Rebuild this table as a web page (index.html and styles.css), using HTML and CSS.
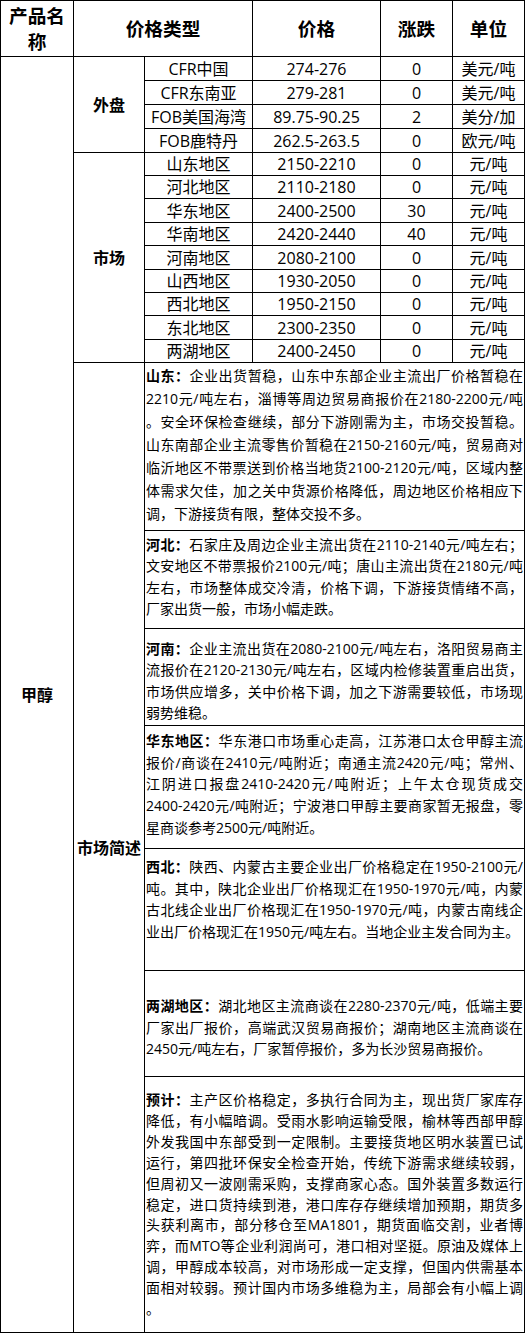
FILE: index.html
```html
<!DOCTYPE html>
<html lang="zh-CN">
<head>
<meta charset="utf-8">
<title>甲醇价格</title>
<link rel="stylesheet" href="styles.css">
</head>
<body>
<div class="sheet">
  <div class="c h">产品名称</div>
  <div class="c h span2">价格类型</div>
  <div class="c h">价格</div>
  <div class="c h">涨跌</div>
  <div class="c h">单位</div>

  <div class="c lbl r20">甲醇</div>
  <div class="c lbl r4">外盘</div>
  <div class="c">CFR中国</div><div class="c">274-276</div><div class="c">0</div><div class="c">美元/吨</div>
  <div class="c">CFR东南亚</div><div class="c">279-281</div><div class="c">0</div><div class="c">美元/吨</div>
  <div class="c">FOB美国海湾</div><div class="c">89.75-90.25</div><div class="c">2</div><div class="c">美分/加</div>
  <div class="c">FOB鹿特丹</div><div class="c">262.5-263.5</div><div class="c">0</div><div class="c">欧元/吨</div>

  <div class="c lbl r9">市场</div>
  <div class="c">山东地区</div><div class="c">2150-2210</div><div class="c">0</div><div class="c">元/吨</div>
  <div class="c">河北地区</div><div class="c">2110-2180</div><div class="c">0</div><div class="c">元/吨</div>
  <div class="c">华东地区</div><div class="c">2400-2500</div><div class="c">30</div><div class="c">元/吨</div>
  <div class="c">华南地区</div><div class="c">2420-2440</div><div class="c">40</div><div class="c">元/吨</div>
  <div class="c">河南地区</div><div class="c">2080-2100</div><div class="c">0</div><div class="c">元/吨</div>
  <div class="c">山西地区</div><div class="c">1930-2050</div><div class="c">0</div><div class="c">元/吨</div>
  <div class="c">西北地区</div><div class="c">1950-2150</div><div class="c">0</div><div class="c">元/吨</div>
  <div class="c">东北地区</div><div class="c">2300-2350</div><div class="c">0</div><div class="c">元/吨</div>
  <div class="c">两湖地区</div><div class="c">2400-2450</div><div class="c">0</div><div class="c">元/吨</div>

  <div class="c lbl r7">市场简述</div>
  <div class="note span4 n-sd">
    <span class="ln"><b>山东：</b>企业出货暂稳，山东中东部企业主流出厂价格暂稳在</span>
    <span class="ln">2210元/吨左右，淄博等周边贸易商报价在2180-2200元/吨</span>
    <span class="ln">。安全环保检查继续，部分下游刚需为主，市场交投暂稳。</span>
    <span class="ln">山东南部企业主流零售价暂稳在2150-2160元/吨，贸易商对</span>
    <span class="ln">临沂地区不带票送到价格当地货2100-2120元/吨，区域内整</span>
    <span class="ln">体需求欠佳，加之关中货源价格降低，周边地区价格相应下</span>
    <span class="ln end">调，下游接货有限，整体交投不多。</span>
  </div>
  <div class="note span4 n-hb">
    <span class="ln"><b>河北：</b>石家庄及周边企业主流出货在2110-2140元/吨左右；</span>
    <span class="ln">文安地区不带票报价2100元/吨；唐山主流出货在2180元/吨</span>
    <span class="ln">左右，市场整体成交冷清，价格下调，下游接货情绪不高，</span>
    <span class="ln end">厂家出货一般，市场小幅走跌。</span>
  </div>
  <div class="note span4 n-hn">
    <span class="ln"><b>河南：</b>企业主流出货在2080-2100元/吨左右，洛阳贸易商主</span>
    <span class="ln">流报价在2120-2130元/吨左右，区域内检修装置重启出货，</span>
    <span class="ln">市场供应增多，关中价格下调，加之下游需要较低，市场现</span>
    <span class="ln end">弱势维稳。</span>
  </div>
  <div class="note span4 n-hd">
    <span class="ln"><b>华东地区：</b>华东港口市场重心走高，江苏港口太仓甲醇主流</span>
    <span class="ln">报价/商谈在2410元/吨附近；南通主流2420元/吨；常州、</span>
    <span class="ln">江阴进口报盘2410-2420元/吨附近；上午太仓现货成交</span>
    <span class="ln">2400-2420元/吨附近；宁波港口甲醇主要商家暂无报盘，零</span>
    <span class="ln end">星商谈参考2500元/吨附近。</span>
  </div>
  <div class="note span4 n-xb">
    <span class="ln"><b>西北：</b>陕西、内蒙古主要企业出厂价格稳定在1950-2100元/</span>
    <span class="ln">吨。其中，陕北企业出厂价格现汇在1950-1970元/吨，内蒙</span>
    <span class="ln">古北线企业出厂价格现汇在1950-1970元/吨，内蒙古南线企</span>
    <span class="ln end">业出厂价格现汇在1950元/吨左右。当地企业主发合同为主。</span>
  </div>
  <div class="note span4 n-lh">
    <span class="ln"><b>两湖地区：</b>湖北地区主流商谈在2280-2370元/吨，低端主要</span>
    <span class="ln">厂家出厂报价，高端武汉贸易商报价；湖南地区主流商谈在</span>
    <span class="ln end">2450元/吨左右，厂家暂停报价，多为长沙贸易商报价。</span>
  </div>
  <div class="note span4 n-yj">
    <span class="ln"><b>预计：</b>主产区价格稳定，多执行合同为主，现出货厂家库存</span>
    <span class="ln">降低，有小幅暗调。受雨水影响运输受限，榆林等西部甲醇</span>
    <span class="ln">外发我国中东部受到一定限制。主要接货地区明水装置已试</span>
    <span class="ln">运行，第四批环保安全检查开始，传统下游需求继续较弱，</span>
    <span class="ln">但周初又一波刚需采购，支撑商家心态。国外装置多数运行</span>
    <span class="ln">稳定，进口货持续到港，港口库存存继续增加预期，期货多</span>
    <span class="ln">头获利离市，部分移仓至MA1801，期货面临交割，业者博</span>
    <span class="ln">弈，而MTO等企业利润尚可，港口相对坚挺。原油及媒体上</span>
    <span class="ln">调，甲醇成本较高，对市场形成一定支撑，但国内供需基本</span>
    <span class="ln">面相对较弱。预计国内市场多维稳为主，局部会有小幅上调</span>
    <span class="ln end">。</span>
  </div>
</div>
</body>
</html>
```

FILE: styles.css
```css
html, body {
  margin: 0;
  padding: 0;
  background: #fff;
}

body {
  color: #000;
  font-family: "Open Sans", "Noto Sans CJK SC", sans-serif;
}

.sheet {
  display: grid;
  box-sizing: border-box;
  width: 525px;
  padding: 1px;
  gap: 1px;
  background: #000;
  grid-template-columns: 72px 70px 107px 127px 71px 71px;
  grid-template-rows:
    55px
    23px 23px 23px 23px
    22px 22px 23px 22px 23px 22px 22px 23px 22px
    167px 97px 96px 122px 121px 105px 255px;
}

.c {
  background: #fff;
  display: flex;
  align-items: center;
  justify-content: center;
  text-align: center;
  font-size: 16px;
  line-height: 20px;
  white-space: nowrap;
}

.h {
  font-weight: 700;
  font-size: 18.67px;
  line-height: 26px;
  white-space: normal;
}

.lbl {
  font-weight: 700;
  font-size: 16px;
}

.span2 { grid-column: span 2; }
.span4 { grid-column: span 4; }
.r4 { grid-row: span 4; }
.r7 { grid-row: span 7; }
.r9 { grid-row: span 9; }
.r20 { grid-row: span 20; }

.note {
  background: #fff;
  box-sizing: border-box;
  padding: 2px 1px 0 1px;
  font-size: 14px;
  line-height: 21.3px;
  overflow: hidden;
}

/* per-section vertical placement, as in the source sheet */
.n-sd { padding-top: 1px; line-height: 23px; }
.n-hb { padding-top: 3px; line-height: 21.3px; }
.n-hn { padding-top: 9px; line-height: 21.3px; }
.n-hd { padding-top: 4px; line-height: 21.7px; }
.n-xb { padding-top: 7px; line-height: 21.7px; }
.n-lh { padding-top: 24px; line-height: 21.5px; }
.n-yj { padding-top: 13px; line-height: 20.9px; }

.ln {
  display: block;
  white-space: nowrap;
  text-align: justify;
  text-align-last: justify;
}

.ln.end {
  text-align-last: left;
}

.ln b {
  font-weight: 700;
}
```
